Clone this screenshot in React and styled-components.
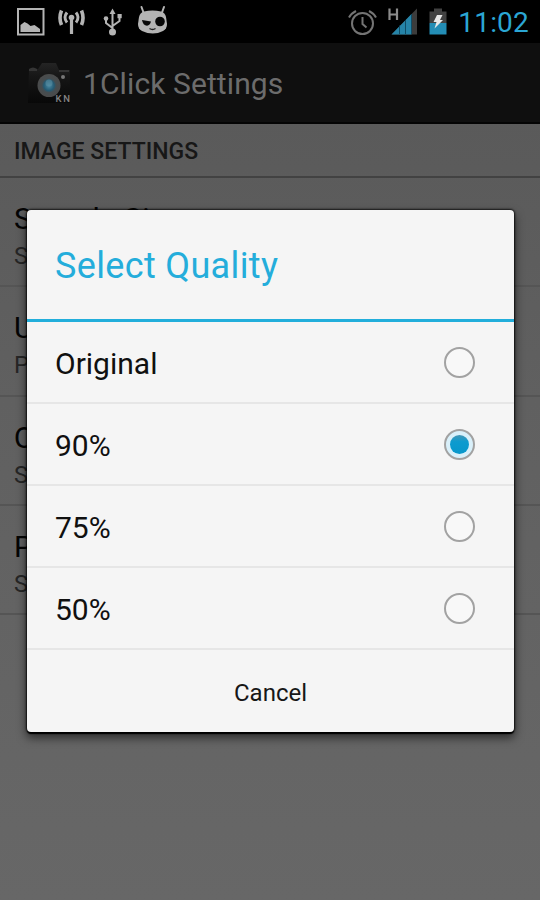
import React from "react";
import styled, { createGlobalStyle } from "styled-components";

const Global = createGlobalStyle`
  * { box-sizing: border-box; }
  body { margin: 0; background: #626262; font-family: Roboto, "Noto Sans", sans-serif; }
`;

const Screen = styled.div`
  position: relative;
  display: flex;
  flex-direction: column;
  width: 540px;
  height: 900px;
  overflow: hidden;
  background: linear-gradient(#5a5a5a 120px, #606060 400px, #676767 900px);
`;

const StatusBar = styled.header`
  display: flex;
  justify-content: space-between;
  height: 43px;
  background: #000;
  svg { display: block; }
`;

const Clock = styled.time`
  padding: 6px 11px 0 0;
  font-size: 28px;
  line-height: 33px;
  letter-spacing: 0.2px;
  color: #2ba6d4;
`;

const StatusGroup = styled.div`
  display: flex;
`;

const AppBar = styled.div`
  display: flex;
  align-items: center;
  height: 81px;
  padding-left: 26px;
  background: #0f0f0f;
  border-bottom: 2px solid #040404;
`;

const AppTitle = styled.h1`
  margin: 2px 0 0 11px;
  font-size: 30px;
  font-weight: 400;
  letter-spacing: 0.1px;
  color: #6c6c6c;
`;

const SectionTitle = styled.h2`
  display: flex;
  align-items: center;
  height: 54px;
  margin: 0;
  padding: 3px 0 0 14px;
  border-bottom: 2px solid #424242;
  font-size: 23px;
  font-weight: 500;
  color: #171717;
`;

const Preference = styled.div`
  height: 109.3px;
  padding: 23px 0 0 14px;
  border-bottom: 2px solid #555;
  white-space: nowrap;
`;

const PreferenceName = styled.div`
  font-size: 30px;
  line-height: 36px;
  letter-spacing: 0.3px;
  color: #050505;
`;

const PreferenceSummary = styled.div`
  margin-top: 4px;
  font-size: 24px;
  line-height: 30px;
  color: #262626;
`;

const Dialog = styled.section`
  position: absolute;
  left: 27px;
  top: 210px;
  width: 487px;
  height: 522px;
  display: flex;
  flex-direction: column;
  border-radius: 4px;
  background: #f5f5f5;
  box-shadow: 0 2px 1px #000, 0 0 2px 1px rgba(0, 0, 0, 0.75), 0 5px 10px 1px rgba(0, 0, 0, 0.55);
`;

const DialogTitle = styled.h2`
  display: flex;
  align-items: center;
  height: 112px;
  margin: 0;
  padding: 3px 0 0 28px;
  border-bottom: 3px solid #22aedb;
  font-size: 36px;
  font-weight: 400;
  letter-spacing: 0.35px;
  color: #24addb;
`;

const Option = styled.label`
  display: flex;
  align-items: center;
  justify-content: space-between;
  height: 82.1px;
  padding: 0 39px 0 28px;
  border-bottom: 2px solid #e6e6e6;
  font-size: 30px;
  color: #101010;
`;

const OptionLabel = styled.span`
  padding-top: 2px;
`;

const Radio = styled.span`
  display: flex;
  align-items: center;
  justify-content: center;
  width: 31px;
  height: 31px;
  border: 2px solid #a2a2a2;
  border-radius: 50%;
  background: ${(p) => (p.$checked ? "#d9f0fa" : "#f8f8f8")};
  &::after {
    content: "";
    width: 19px;
    height: 19px;
    border-radius: 50%;
    background: ${(p) => (p.$checked ? "linear-gradient(#4496b5, #0d9bcf 35%, #0797cb)" : "transparent")};
  }
`;

const CancelButton = styled.button`
  flex: 1;
  padding: 3px 0 0;
  border: 0;
  background: transparent;
  font: 400 24px Roboto, sans-serif;
  color: #171717;
`;

function LeftStatusIcons() {
  return (
    <svg width="180" height="43" viewBox="0 0 180 43" fill="none" stroke="#b4b4b4">
      <rect x="18" y="9" width="25.5" height="25.5" strokeWidth="2" />
      <path d="M20.5 32V25l4-3 3 1.5 3 2.5 4-1 5.5 4V32z" fill="#b4b4b4" stroke="none" />
      <path d="M71.5 17v17" strokeWidth="3.2" />
      <circle cx="71.5" cy="17.5" r="2.8" fill="#b4b4b4" stroke="none" />
      <path d="M67 12.5q-4 5 0 10M76 12.5q4 5 0 10" strokeWidth="3" />
      <path d="M61.5 10.5q-3 7.5 0 14.5M81.5 10.5q3 7.5 0 14.5" strokeWidth="3.6" />
      <path d="M112.5 31V12M112.5 28l-6.5-5v-4M112.5 26l7-5v-5" strokeWidth="2" />
      <path d="M109.5 14l3-5.5 3 5.5z" fill="#b4b4b4" stroke="none" />
      <circle cx="106" cy="18.5" r="2.3" fill="#b4b4b4" stroke="none" />
      <rect x="117.5" y="14" width="4.2" height="4.2" fill="#b4b4b4" stroke="none" />
      <circle cx="112.5" cy="32" r="3.5" fill="#b4b4b4" stroke="none" />
      <path d="M143.5 12.5L141.5 7M162 12.5L164 7" strokeWidth="2" strokeLinecap="round" />
      <path d="M144 11.5q8.5-2 17 0 4 1 5 5.5l1 7q0 5-4 7-10 5-21 0-4-2-4-7l1-7q1-4.500 5-5.500z" fill="#b4b4b4" stroke="none" />
      <path d="M142 20l9 1.500q-1 4-4 4.200-4 0-5-5.700z" fill="#080808" stroke="none" />
      <circle cx="160" cy="21.500" r="4.800" fill="#080808" stroke="none" />
      <path d="M149.500 28.500q3 2 6 0" stroke="#222" strokeWidth="1.500" />
    </svg>
  );
}

function RightStatusIcons() {
  return (
    <svg width="112" height="43" viewBox="348 0 112 43" fill="none">
      <g stroke="#747474" strokeWidth="2">
        <circle cx="364.500" cy="23.500" r="10.500" />
        <path d="M364.500 17v7l4 3.500M351 17.500q2-4 7-6.500M371 11q5 2.500 7 6.500" />
      </g>
      <path d="M391.500 8.500v11.500M399 8.500v11.500M391.500 14.500H399" stroke="#8b8b8b" strokeWidth="2.200" />
      <path d="M419 8.500V34.500H393.500z" fill="#3c3c3c" />
      <path d="M413.500 14V34.500H393.500z" fill="#2584a8" />
      <path d="M401.500 25.500V34M407.500 20V34M413.500 14V34" stroke="#104c65" strokeWidth="1" />
      <path d="M431.500 11.500h4.500V8.500h8v3h4.500V23h-17z" fill="#424242" />
      <path d="M431.500 23h17v11.500h-17z" fill="#238db5" />
      <path d="M439 15h5.500l-2.500 5h3l-8.500 8.500 2-6.500h-3z" fill="#e8e8e8" />
    </svg>
  );
}

const CameraLabel = styled.text`
  font: 500 9.500px Roboto, sans-serif;
  fill: #858585;
`;

function CameraIcon() {
  return (
    <svg width="46" height="46" viewBox="26 61 46 46">
      <defs>
        <linearGradient id="body" x2="0" y2="1">
          <stop stopColor="#242424" />
          <stop offset=".35" stopColor="#161616" />
          <stop offset="1" stopColor="#080808" />
        </linearGradient>
        <radialGradient id="lens">
          <stop stopColor="#4b8ba5" />
          <stop offset=".45" stopColor="#245a73" />
          <stop offset=".62" stopColor="#464d50" />
          <stop offset="1" stopColor="#4b4b4b" />
        </radialGradient>
      </defs>
      <path d="M29 70h9l4-6h14l3 7h11v33H28z" fill="url(#body)" />
      <path d="M29 70q4-3 8 0v2h-8zM59 71h10v2H59z" fill="#353535" />
      <circle cx="49" cy="86.500" r="11.500" fill="url(#lens)" />
      <circle cx="49" cy="84" r="3.500" fill="#5a8da1" opacity=".6" />
      <circle cx="63" cy="78" r="2" fill="#777" />
      <CameraLabel x="55.500" y="102.500" textLength="14.500">KN</CameraLabel>
    </svg>
  );
}

const preferences = [
  ["Sample Size", "Set image size"],
  ["Upload", "Preferences"],
  ["Quality", "Select quality"],
  ["Path", "Select path"],
];

const options = ["Original", "90%", "75%", "50%"];

export default function App() {
  return (
    <>
      <Global />
      <Screen>
        <StatusBar>
          <LeftStatusIcons />
          <StatusGroup>
            <RightStatusIcons />
            <Clock>11:02</Clock>
          </StatusGroup>
        </StatusBar>
        <AppBar>
          <CameraIcon />
          <AppTitle>1Click Settings</AppTitle>
        </AppBar>
        <SectionTitle>IMAGE SETTINGS</SectionTitle>
        {preferences.map(([name, summary]) => (
          <Preference key={name}>
            <PreferenceName>{name}</PreferenceName>
            <PreferenceSummary>{summary}</PreferenceSummary>
          </Preference>
        ))}
        <Dialog role="dialog">
          <DialogTitle>Select Quality</DialogTitle>
          {options.map((label) => (
            <Option key={label}>
              <OptionLabel>{label}</OptionLabel>
              <Radio $checked={label === "90%"} />
            </Option>
          ))}
          <CancelButton>Cancel</CancelButton>
        </Dialog>
      </Screen>
    </>
  );
}
